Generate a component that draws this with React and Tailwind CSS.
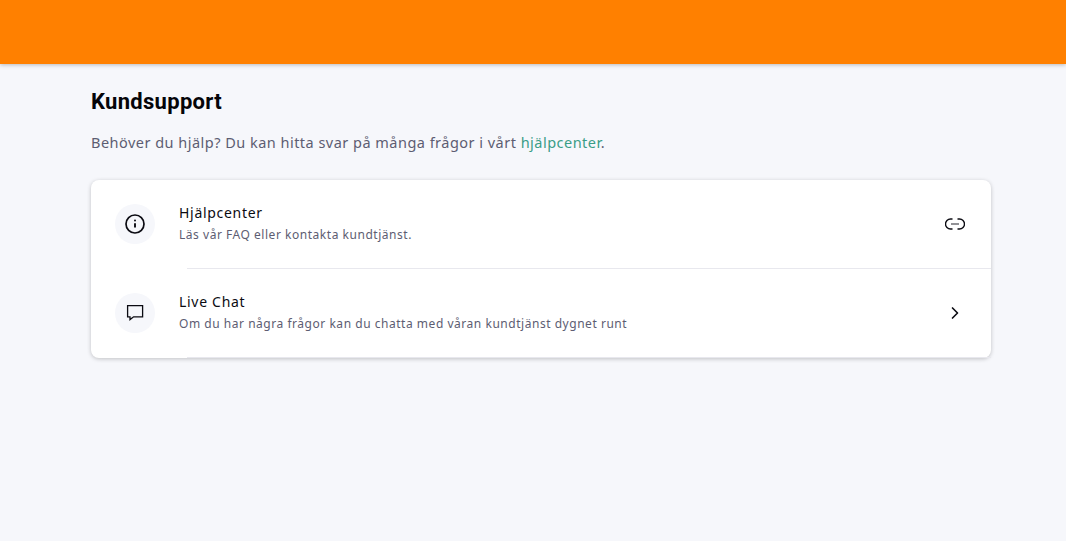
import React from 'react';
import { ChevronRight } from 'lucide-react';

const InfoIcon = () => (
  <svg width="20" height="20" viewBox="0 0 20 20" fill="none" stroke="#0b0b12">
    <circle cx="10" cy="10" r="9" strokeWidth="1.7" />
    <path d="M10 9.2v4.3" strokeWidth="1.9" />
    <circle cx="10" cy="6.6" r="1" fill="#0b0b12" stroke="none" />
  </svg>
);

const ChatIcon = () => (
  <svg width="18" height="18" viewBox="0 0 18 18" fill="none" stroke="#0b0b12" strokeWidth="1.3">
    <path d="M1.6 1.6h15v11.2H7.6l-3.6 2.8v-2.8H1.6z" />
  </svg>
);

const LinkIcon = () => (
  <svg width="20" height="12" viewBox="0 0 20 12" fill="none" stroke="#0b0b12" strokeWidth="1.4">
    <path d="M7.5 1H5.5a5 5 0 0 0 0 10H7.5" />
    <path d="M12.5 1h2a5 5 0 0 1 0 10H12.5" />
    <path d="M6 6h8" stroke="#77777c" strokeWidth="1.6" />
  </svg>
);

const rows = [
  { title: 'Hjälpcenter', text: 'Läs vår FAQ eller kontakta kundtjänst.', icon: <InfoIcon />, right: <LinkIcon /> },
  {
    title: 'Live Chat',
    text: 'Om du har några frågor kan du chatta med våran kundtjänst dygnet runt',
    icon: <ChatIcon />,
    right: <ChevronRight size={20} color="#0b0b12" strokeWidth={2} />,
  },
];

export default function App() {
  return (
    <div className="min-h-[541px] bg-[#f6f7fb] font-['Noto_Sans',sans-serif]">
      {/* top bar */}
      <div className="h-16 bg-[#ff8000] shadow-[0_1px_4px_rgba(0,0,0,0.25)]" />

      <div className="px-[91px] pt-[24px] w-[1082px]">
        <h1 className="font-['Roboto',sans-serif] font-bold text-[22px] leading-[28px] tracking-[0.3px] text-[#050509]">Kundsupport</h1>
        <p className="mt-[14px] text-[14.5px] leading-[24px] tracking-[0.48px] text-[#5d5d72]">
          Behöver du hjälp? Du kan hitta svar på många frågor i vårt <span className="text-[#3a9d87]">hjälpcenter</span>.
        </p>

        <div className="mt-[26px] w-[900px] bg-white rounded-lg shadow-[0_1px_4px_rgba(0,0,0,0.22)]">
          {rows.map((r) => (
            <div key={r.title} className="h-[89px] flex flex-col">
              <div className="flex-1 flex items-center pl-6 pr-[26px]">
                <div className="w-10 h-10 rounded-full bg-[#f6f7fb] flex items-center justify-center shrink-0">{r.icon}</div>
                <div className="ml-6 flex-1 pb-[1px]">
                  <div className="text-[14px] leading-[20px] tracking-[0.7px] text-[#0b0b12]">{r.title}</div>
                  <div className="mt-[2px] text-[12px] leading-[20px] tracking-[0.53px] text-[#5d5d72]">{r.text}</div>
                </div>
                <div className="w-5 flex justify-center">{r.right}</div>
              </div>
              <div className="ml-24 h-px bg-[#e8e8ee]" />
            </div>
          ))}
        </div>
      </div>
    </div>
  );
}
